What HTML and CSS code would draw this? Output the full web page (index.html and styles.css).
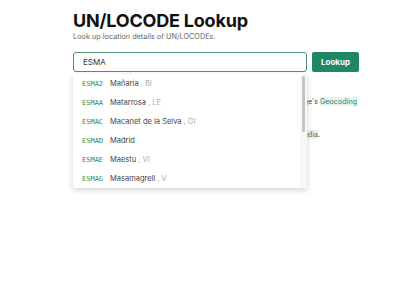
FILE: index.html
```html
<!DOCTYPE html>
<html lang="en">
<head>
    <meta charset="UTF-8">
    <meta name="viewport" content="width=device-width, initial-scale=1.0">
    <title>UN/LOCODE Lookup</title>
    <link rel="stylesheet" href="styles.css">
</head>
<body>

    <div class="container">
        <h1>UN/LOCODE Lookup</h1>
        <p class="subtitle">Look up location details of UN/LOCODEs.</p>

        <form class="search" id="lookupForm">
            <div class="field">
                <input type="text" id="code" name="code" value="ESMA" autocomplete="off">
                <div class="dropdown">
                    <ul class="suggestions">
                        <li><span class="code">ESMA2</span><span class="name">Mañaria</span><span class="region">, BI</span></li>
                        <li><span class="code">ESMAA</span><span class="name">Matarrosa</span><span class="region">, LE</span></li>
                        <li><span class="code">ESMAC</span><span class="name">Macanet de la Selva</span><span class="region">, GI</span></li>
                        <li><span class="code">ESMAD</span><span class="name">Madrid</span></li>
                        <li><span class="code">ESMAE</span><span class="name">Maestu</span><span class="region">, VI</span></li>
                        <li><span class="code">ESMAG</span><span class="name">Masamagrell</span><span class="region">, V</span></li>
                    </ul>
                    <div class="scrollbar"><div class="thumb"></div></div>
                </div>
            </div>
            <button type="submit">Lookup</button>
        </form>

        <div class="info">
            <p>Coordinates which are missing are filled in if possible using OpenCage's <a href="#">Geocoding</a> API, results may vary.</p>
            <p>Country and subdivision names are largely taken from English <a href="#">Wikipedia</a>.</p>
        </div>
    </div>

</body>
</html>
```

FILE: styles.css
```css
* {
    margin: 0;
    padding: 0;
    box-sizing: border-box;
}

body {
    font-family: 'Inter', 'Liberation Sans', sans-serif;
    background: #fff;
    color: #222;
    min-height: 100vh;
}

.container {
    width: 286px;
    margin-left: 73px;
    padding-top: 11px;
}

h1 {
    font-size: 18px;
    line-height: 20px;
    font-weight: 700;
    color: #111;
    letter-spacing: -0.2px;
}

.subtitle {
    font-size: 7.3px;
    line-height: 10px;
    color: #666;
    margin-top: 1px;
}

.search {
    display: flex;
    gap: 5px;
    margin-top: 10px;
}

.field {
    position: relative;
    flex: 1;
}

input[type="text"] {
    display: block;
    width: 100%;
    height: 20px;
    padding: 0 9px;
    border: 1px solid #4f8f72;
    border-radius: 3px;
    font-family: inherit;
    font-size: 8px;
    color: #333;
    outline: none;
}

button {
    width: 47px;
    height: 20px;
    background-color: #1f8763;
    color: #fff;
    border: none;
    border-radius: 2px;
    font-family: inherit;
    font-size: 8px;
    font-weight: 700;
}

.dropdown {
    position: absolute;
    top: 22px;
    left: 0;
    width: 100%;
    display: flex;
    background: #fff;
    box-shadow: 0 2px 6px rgba(0, 0, 0, 0.18);
    z-index: 2;
}

.suggestions {
    flex: 1;
    list-style: none;
}

.suggestions li {
    display: flex;
    align-items: center;
    height: 19px;
    padding-left: 9px;
    font-size: 7.5px;
    white-space: nowrap;
}

.scrollbar {
    width: 7px;
    background: #f7f7f7;
    padding: 2px 2px 0;
}

.thumb {
    height: 56px;
    background: #c4c4c4;
    border-radius: 2px;
}

.code {
    font-family: 'DejaVu Sans Mono', monospace;
    font-size: 7px;
    color: #2d8a68;
    width: 28px;
}

.name {
    color: #444;
}

.region {
    color: #aaa;
    margin-left: 2px;
}

.info {
    margin-top: 24px;
    font-size: 7.2px;
    color: #444;
}

.info p {
    line-height: 12px;
    margin-bottom: 9px;
}

.info a {
    color: #2d8a68;
    text-decoration: none;
    background: #e9f3ee;
}
```
